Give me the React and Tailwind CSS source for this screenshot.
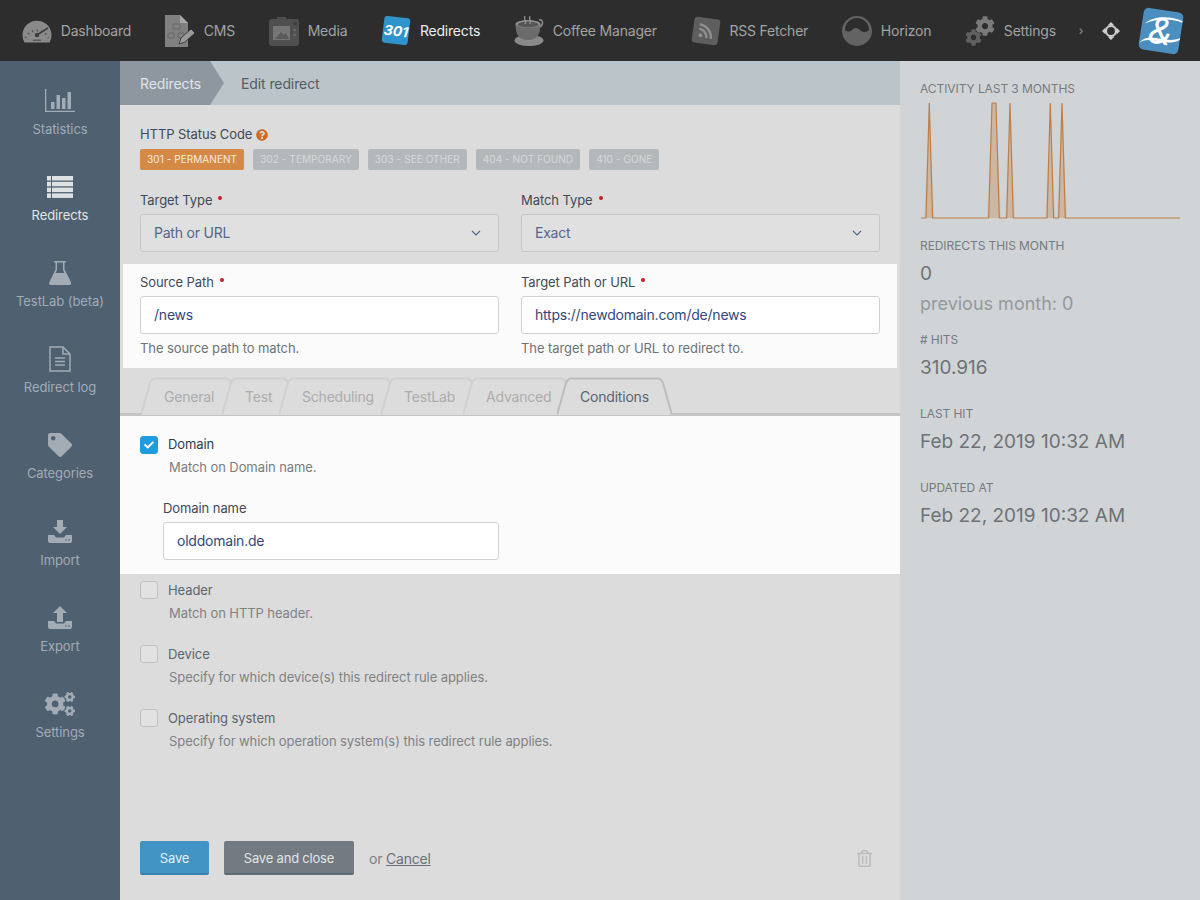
import React from "react";
import { FaTag, FaRss, FaCogs, FaCog, FaRegTrashAlt, FaCheck, FaQuestionCircle } from "react-icons/fa";

const Gauge = () => (
  <svg width="30" height="30" viewBox="0 0 30 30">
    <path d="M2.500 26.500a14.500 14.500 0 1 1 25 0z" fill="#8a8a8a" />
    <path d="M3.500 22a12.500 12.500 0 0 1 23 0" fill="none" stroke="#4f4f4f" strokeWidth="2" strokeDasharray="1.200 3.500" />
    <path d="M15 19l11-7" stroke="#3d3d3d" strokeWidth="1.500" />
    <circle cx="15" cy="19" r="2.200" fill="#3d3d3d" />
    <rect x="11" y="23.500" width="8" height="1.500" fill="#5a5a5a" />
  </svg>
);
const Cms = () => (
  <svg width="30" height="34" viewBox="0 0 30 34">
    <path d="M0 1h15l8 8v24H0z" fill="#808080" />
    <path d="M15 1v8h8z" fill="#a5a5a5" />
    <g fill="none" stroke="#666" strokeWidth="1"><rect x="8" y="10" width="7" height="5" rx="1"/><rect x="3" y="19" width="6" height="5" rx="1"/><rect x="13" y="19" width="6" height="5" rx="1"/></g>
    <path d="M14 30l2-6 10-9 4 4-10 9z" fill="#9b9b9b" stroke="#2d2d2d" strokeWidth=".8" />
  </svg>
);
const Media = () => (
  <svg width="30" height="32" viewBox="0 0 30 32">
    <path d="M8 2h9v3H8z" fill="#4d4d4d" />
    <rect x="0" y="4" width="30" height="27" rx="3" fill="#4f4f4f" />
    <rect x="24" y="7" width="4" height="3" fill="#3f3f3f" />
    <rect x="4" y="11" width="17" height="14" fill="#757575" />
    <path d="M6 24l6-7 3 3 2-2 3 6z" fill="#5a5a5a" />
    <circle cx="25.500" cy="15" r="1.200" fill="#707070" /><circle cx="25.500" cy="20" r="1.200" fill="#707070" />
  </svg>
);
const Coffee = () => (
  <svg width="30" height="32" viewBox="0 0 30 32">
    <ellipse cx="15" cy="25.500" rx="14.500" ry="5.500" fill="#8a8a8a" />
    <path d="M1.500 9h25c0 10-3 16-12.500 16S1.500 19 1.500 9z" fill="#6c6c6c" />
    <ellipse cx="14" cy="9" rx="12.500" ry="4" fill="#8f8f8f" />
    <ellipse cx="14" cy="9.500" rx="10.500" ry="3" fill="#575757" />
    <path d="M25 5c4-1 5 4 1 7" fill="none" stroke="#8a8a8a" strokeWidth="1.500" />
    <path d="M11 1c-2 3 2 4 0 8M16 1c-2 3 2 4 0 8" fill="none" stroke="#9a9a9a" strokeWidth="1.200" />
  </svg>
);
const Horizon = () => (
  <svg width="30" height="32" viewBox="0 0 30 32">
    <circle cx="15" cy="16" r="15" fill="#636363" />
    <path d="M3 15a12 12 0 0 1 24 0c-1 1-3 2-5 2-3 0-5-4-8-4s-4.500 3.500-7 3.500c-1.500 0-3-.5-4-1.500z" fill="#2d2d2d" />
  </svg>
);
const Move = () => (
  <svg width="18" height="18" viewBox="0 0 18 18" fill="#cfcfcf">
    <path d="M9 0l3.500 3.500h-7zM9 18l-3.500-3.500h7zM0 9l3.500-3.500v7zM18 9l-3.500 3.500v-7z" />
    <circle cx="9" cy="9" r="5" fill="none" stroke="#cfcfcf" strokeWidth="2.200" />
  </svg>
);
const Stats = () => (
  <svg width="30" height="24" viewBox="0 0 30 24" fill="#a3abb4">
    <path d="M0 0h1.300v21.700H30V23H0z" />
    <rect x="6" y="13" width="3.500" height="7" /><rect x="11.500" y="6" width="3.500" height="14" /><rect x="17" y="9" width="3.500" height="11" /><rect x="22.500" y="3" width="3.500" height="17" />
  </svg>
);
const ListI = () => (
  <svg width="26" height="22" viewBox="0 0 26 22" fill="#dfe2e5">
    <rect x="0" y="0" width="4" height="4.500" /><rect x="5" y="0" width="21" height="4.500" />
    <rect x="0" y="5.800" width="4" height="4.500" /><rect x="5" y="5.800" width="21" height="4.500" />
    <rect x="0" y="11.600" width="4" height="4.500" /><rect x="5" y="11.600" width="21" height="4.500" />
    <rect x="0" y="17.400" width="4" height="4.500" /><rect x="5" y="17.400" width="21" height="4.500" />
  </svg>
);
const Flask = () => (
  <svg width="22" height="24" viewBox="0 0 22 24" fill="#a3abb4">
    <path d="M5 0h12v1.500h-1.500v7L22 21a2 2 0 0 1-2 3H2a2 2 0 0 1-2-2L6.500 8.500v-7H5z" />
    <path d="M8 1.500h6v7.500l1.500 3h-9L8 9z" fill="#4f6070" />
  </svg>
);
const Doc = () => (
  <svg width="22" height="26" viewBox="0 0 22 26" fill="none" stroke="#a3abb4" strokeWidth="1.500">
    <path d="M1 1h13l7 7v17H1z" /><path d="M14 1v7h7" /><path d="M6 12h10M6 15.500h10M6 19h10" />
  </svg>
);
const Tray = ({ up }) => (
  <svg width="24" height="23" viewBox="0 0 24 23" fill="#a3abb4">
    {up ? <path d="M12 0l7 7h-4v9H9V7H5z" /> : <path d="M9 0h6v7h4l-7 7-7-7h4z" />}
    <path d="M0 15h6l2 2.500h8l2-2.500h6v6a2 2 0 0 1-2 2H2a2 2 0 0 1-2-2z" />
    <circle cx="18" cy="20" r=".8" fill="#4f6070" /><circle cx="21" cy="20" r=".8" fill="#4f6070" />
  </svg>
);

const top = [
  ["Dashboard", <Gauge />],
  ["CMS", <Cms />],
  ["Media", <Media />],
  ["Redirects", (
    <span className="flex h-[27px] w-[26px] rotate-[7deg] items-center justify-center rounded-[3px] bg-[#2f94cc] text-[14px] font-bold italic text-white">301</span>
  ), true],
  ["Coffee Manager", <Coffee />],
  ["RSS Fetcher", (
    <span className="flex h-[26px] w-[26px] rotate-[8deg] items-center justify-center rounded-[3px] bg-[#5e5e5e]"><FaRss size={16} className="text-[#8f8f8f]" /></span>
  )],
  ["Horizon", <Horizon />],
  ["Settings", (
    <span className="relative block h-[30px] w-[30px]">
      <FaCog size={20} className="absolute right-0 top-0 text-[#7a7a7a]" />
      <FaCog size={17} className="absolute bottom-0 left-0 text-[#5f5f5f]" />
    </span>
  )],
];

const side = [
  ["Statistics", <Stats />],
  ["Redirects", <ListI />, true],
  ["TestLab (beta)", <Flask />],
  ["Redirect log", <Doc />],
  ["Categories", <FaTag size={24} />],
  ["Import", <Tray />],
  ["Export", <Tray up />],
  ["Settings", <FaCogs size={30} />],
];

const tags = ["301 - Permanent", "302 - Temporary", "303 - See other", "404 - Not found", "410 - Gone"];

const tabs = [
  ["General", 99],
  ["Test", 75],
  ["Scheduling", 120],
  ["TestLab", 100],
  ["Advanced", 112],
  ["Conditions", 115, true],
];

function Tab({ label, w, active }) {
  const stroke = active ? "#bdbdbd" : "#d0d0d0";
  const d = `M0 38 L9 6 Q10.500 1.500 15 1.500 L${w - 15} 1.500 Q${w - 10.500} 1.500 ${w - 9} 6 L${w} 38`;
  return (
    <div
      className={`relative flex h-[38px] shrink-0 -ml-[18px] items-center pl-[23px] text-[14px] tracking-[-0.2px] ${active ? "text-[#5b6470]" : "text-[#adadad]"}`}
      style={{ width: w }}
    >
      <svg className="absolute inset-0" width={w} height="38" fill="none">
        <path d={d} fill="#dcdcdc" stroke={stroke} strokeWidth="2" />
      </svg>
      <span className="relative">{label}</span>
    </div>
  );
}

function Field({ label, req, value, help, select, w = "w-[359px]" }) {
  return (
    <div className={w}>
      <div className="flex h-[20px] items-center text-[13px] leading-[20px] text-[#3f4a58]">
        {label}
        {req && <span className="ml-[6px] mb-[5px] h-[4px] w-[4px] rounded-full bg-[#c22026]" />}
      </div>
      <div className={`mt-[4px] flex h-[38px] items-center justify-between rounded-[3px] border px-[13px] pb-[1px] text-[14px] tracking-[-0.22px] ${select ? "border-[#c6c6c6] bg-[#e0e0e0] text-[#55658a]" : "border-[#d2d2d2] bg-white text-[#34477a]"}`}>
        {value}
        {select && (
          <svg width="10" height="6" viewBox="0 0 10 6" fill="none" stroke="#55658a" strokeWidth="1.100" className="mr-[4px]">
            <path d="M1 1l4 4 4-4" />
          </svg>
        )}
      </div>
      {help && <div className="mt-[6px] h-[16px] text-[13px] leading-[16px] text-[#6f7377]">{help}</div>}
    </div>
  );
}

function Check({ label, help, checked }) {
  return (
    <div className="h-[64px]">
      <div className="flex h-[18px] items-center">
        <span className={`flex h-[18px] w-[18px] shrink-0 items-center justify-center rounded-[3px] border ${checked ? "border-[#1f9be0] bg-[#1f9be0]" : "border-[#c0c0c0] bg-[#e2e2e2]"}`}>
          {checked && <FaCheck size={10} className="text-white" />}
        </span>
        <span className={`ml-[10px] text-[13px] ${checked ? "text-[#2d3b4e]" : "pt-[2px] text-[#5b6470]"}`}>{label}</span>
      </div>
      <div className={`ml-[29px] text-[13px] leading-[16px] ${checked ? "mt-[5px] text-[#7c7c7c]" : "mt-[6px] text-[#7f8285]"}`}>{help}</div>
    </div>
  );
}

const chart = [
  [9.300, 9.300], [72, 76], [90, 90], [130.300, 130.300], [142, 142],
];

function Chart() {
  const base = 118;
  const d = `M1 ${base} ` + chart.map(([a, b]) => `L${a - 3.300} ${base} L${a} 3 L${b} 3 L${b + 3.300} ${base}`).join(" ") + ` L260 ${base}`;
  const glow = `M1 ${base} ` + chart.map(([a, b]) => `L${a - 5} ${base} L${a} 3 L${b} 3 L${b + 5} ${base}`).join(" ") + ` L260 ${base}`;
  return (
    <svg width="260" height="122" viewBox="0 0 260 122" className="mt-[3px] block">
      <path d={glow} fill="#c9915f" fillOpacity=".18" />
      <path d={d} fill="#c9915f" fillOpacity=".3" stroke="#bd7f47" strokeWidth="1.200" />
    </svg>
  );
}

function Stat({ label, value, mt }) {
  return (
    <div className={mt}>
      <div className="text-[12px] leading-[16px] text-[#757b80]">{label}</div>
      <div className="mt-[8px] text-[19px] leading-[24px] tracking-normal text-[#6d7276]">{value}</div>
    </div>
  );
}

export default function App() {
  return (
    <div className="flex h-[900px] w-[1200px] flex-col overflow-hidden bg-[#dcdcdc] font-[Inter,sans-serif] tracking-[-0.08px]">
      <header className="flex h-[61px] shrink-0 items-center bg-[#2d2d2d] pl-[22px]">
        {top.map(([t, icon, active]) => (
          <div key={t} className="mr-[33.8px] flex items-center">
            <span className="flex h-[34px] w-[30px] items-center justify-center">{icon}</span>
            <span className={`ml-[8.8px] text-[14px] tracking-[-0.2px] ${active ? "text-[#ececec]" : "text-[#a3a3a3]"}`}>{t}</span>
          </div>
        ))}
        <span className="-ml-[11px] text-[12px] text-[#999]">›</span>
        <span className="ml-[19px]"><Move /></span>
        <span className="relative ml-[21px] flex h-[42px] w-[40px] rotate-[9deg] items-center justify-center rounded-[5px] bg-[#4a8fc0] font-['Liberation_Serif',serif] text-[36px] italic leading-none text-white">
          <svg width="40" height="42" viewBox="0 0 40 42" fill="#fff" className="absolute inset-0">
            <path d="M3 16C12 6 28 5 40 8v1.500C28 7 14 9 3 16z" />
            <path d="M0 36C10 22 26 34 40 25v2C26 37 12 26 0 36z" />
          </svg>
          <span className="relative">&amp;</span>
        </span>
      </header>
      <div className="flex min-h-0 flex-1">
        <aside className="flex w-[120px] shrink-0 flex-col bg-[#4f6070] pt-[3px]">
          {side.map(([t, icon, active]) => (
            <div key={t} className={`flex h-[86.12px] flex-col items-center ${active ? "text-[#e2e5e8]" : "text-[#a3abb4]"}`}>
              <span className="mt-[21px] flex h-[32px] items-center justify-center">{icon}</span>
              <span className="mt-[2px] text-[13px] leading-[20px]">{t}</span>
            </div>
          ))}
        </aside>
        <main className="flex w-[780px] shrink-0 flex-col">
          <nav className="flex h-[44px] shrink-0 items-center bg-[#bbc4c8] text-[14px] tracking-[-0.1px]">
            <div className="flex h-full w-[90px] items-center whitespace-nowrap bg-[#8e979f] pl-[20px] text-[#e2e4e6]">Redirects</div>
            <svg width="14" height="44" viewBox="0 0 14 44" className="shrink-0"><path d="M0 0l14 22L0 44z" fill="#8e979f" /></svg>
            <div className="ml-[17px] text-[#525b66]">Edit redirect</div>
          </nav>
          <section className="px-[20px] pt-[20px]">
            <div className="flex h-[20px] items-center text-[13px] text-[#3f4a58]">
              HTTP Status Code
              <FaQuestionCircle size={12} className="ml-[4px] text-[#cf6d27]" />
            </div>
            <div className="mt-[4px] flex gap-[9px]">
              {tags.map((t, i) => (
                <span key={t} className={`flex h-[21px] items-center rounded-[2px] px-[7px] text-[10px] uppercase tracking-[0.07px] ${i === 0 ? "bg-[#d48a46] text-[#f7ebdf]" : "bg-[#b3b8bb] text-[#d7d9da]"}`}>{t}</span>
              ))}
            </div>
            <div className="mt-[20px] flex gap-[22px]">
              <Field label="Target Type" req value="Path or URL" select />
              <Field label="Match Type" req value="Exact" select />
            </div>
          </section>
          <section className="mx-[3px] mt-[12px] flex h-[104px] shrink-0 gap-[22px] bg-[#fbfbfb] px-[17px] pt-[8px]">
            <Field label="Source Path" req value="/news" help="The source path to match." />
            <Field label="Target Path or URL" req value="https://newdomain.com/de/news" help="The target path or URL to redirect to." />
          </section>
          <div className="relative mt-[9px] flex h-[39px] shrink-0 pl-[39px]">
            <div className="absolute inset-x-0 bottom-0 h-[3px] bg-[#c4c4c4]" />
            {tabs.map(([l, w, a]) => <Tab key={l} label={l} w={w} active={a} />)}
          </div>
          <section className="h-[158px] shrink-0 bg-[#fbfbfb] px-[20px] pt-[20px]">
            <Check label="Domain" help="Match on Domain name." checked />
            <div className="-mt-[2px] ml-[23px]">
              <Field label="Domain name" value="olddomain.de" w="w-[336px]" />
            </div>
          </section>
          <section className="px-[20px] pt-[7px]">
            <Check label="Header" help="Match on HTTP header." />
            <Check label="Device" help="Specify for which device(s) this redirect rule applies." />
            <Check label="Operating system" help="Specify for which operation system(s) this redirect rule applies." />
          </section>
          <footer className="mt-[68px] flex items-center px-[20px] tracking-[-0.2px]">
            <button className="h-[34px] w-[69px] rounded-[2px] border-b-2 border-[#3a82ad] bg-[#4194c4] pt-[3px] text-[13px] text-[#e6f0f6]">Save</button>
            <button className="ml-[15px] h-[34px] w-[130px] rounded-[2px] border-b-2 border-[#646a71] bg-[#737a82] pt-[3px] text-[13px] text-[#e2e4e6]">Save and close</button>
            <span className="ml-[15px] text-[14px] text-[#7b8087]">or <span className="text-[#6b7079] underline">Cancel</span></span>
            <FaRegTrashAlt size={17} className="ml-auto mr-[7px] text-[#bcbcbc]" />
          </footer>
        </main>
        <aside className="flex-1 bg-[#d0d4d6] px-[20px] pt-[20px]">
          <div className="text-[12px] leading-[16px] text-[#757b80]">ACTIVITY LAST 3 MONTHS</div>
          <Chart />
          <div className="mt-[16px] text-[12px] leading-[16px] text-[#757b80]">REDIRECTS THIS MONTH</div>
          <div className="mt-[8px] text-[19px] leading-[24px] text-[#6d7276]">0</div>
          <div className="mt-[6px] text-[18px] leading-[24px] tracking-normal text-[#94999d]">previous month: 0</div>
          <Stat label="# HITS" value="310.916" mt="mt-[16px]" />
          <Stat label="LAST HIT" value="Feb 22, 2019 10:32 AM" mt="mt-[26px]" />
          <Stat label="UPDATED AT" value="Feb 22, 2019 10:32 AM" mt="mt-[26px]" />
        </aside>
      </div>
    </div>
  );
}
